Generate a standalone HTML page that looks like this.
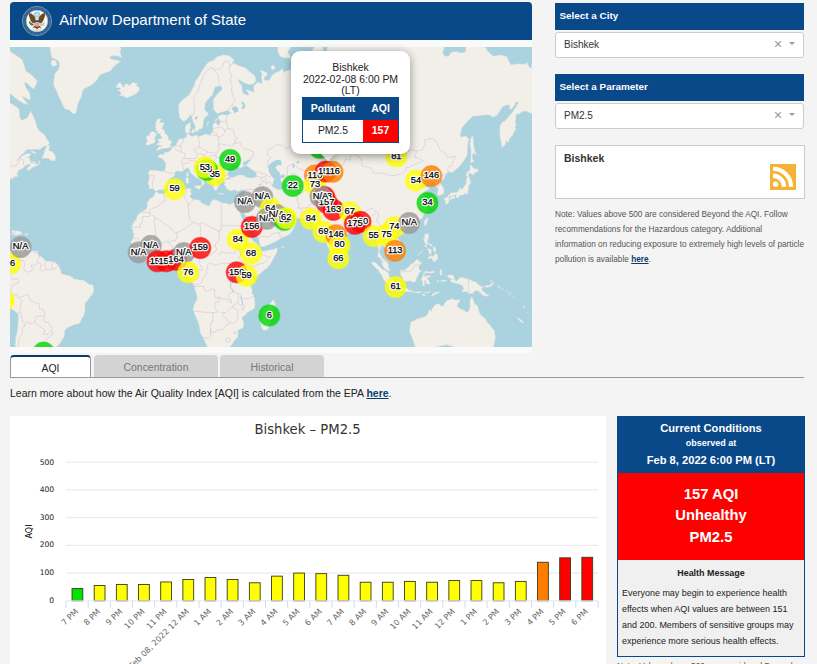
<!DOCTYPE html>
<html lang="en">
<head>
<meta charset="utf-8">
<title>AirNow Department of State</title>
<style>
*{box-sizing:border-box;margin:0;padding:0}
html,body{width:817px;height:664px;overflow:hidden;background:#f4f4f4;font-family:"Liberation Sans",Arial,sans-serif;color:#222}
.abs{position:absolute}
#hdr{left:10px;top:2px;width:522px;height:38px;background:#0a4989;border-radius:4px 4px 0 0}
#hdr .t{position:absolute;left:49.3px;top:9px;font-size:15px;color:#fff;line-height:17px;white-space:nowrap}
#seal{position:absolute;left:12px;top:4px}
#map{left:10px;top:47px;width:522px;height:300px;background:#aad3df;overflow:hidden}
.ph{background:#0a4989;color:#fff;font-weight:bold;font-size:9.9px;line-height:26px;padding-left:4.5px;height:27px;left:555px;width:249.3px}
.sel{left:555px;width:249.3px;height:26px;background:#fff;border:1px solid #ccc;border-radius:3px;font-size:10px;line-height:23.6px;padding-left:8px;color:#333}
.sel .x{position:absolute;right:21px;top:0;font-size:14.5px;color:#999}
.sel .a{position:absolute;right:8.6px;top:9.7px;width:0;height:0;border-left:3.2px solid transparent;border-right:3.2px solid transparent;border-top:3.3px solid #999}
#rss{left:555px;top:145px;width:249.5px;height:53.5px;background:#fff;border:1px solid #ccc}
#rss .n{position:absolute;left:8px;top:6px;font-size:10.5px;font-weight:bold;color:#333}
#note{left:555px;top:208.3px;width:260px;font-size:8.25px;line-height:14.9px;color:#555;white-space:nowrap}
#note b{color:#0a3d6e;text-decoration:underline}
.tab{top:355px;height:22px;font-size:10.45px;line-height:26.6px;text-align:center;color:#777;background:#d3d3d3;border-radius:4px 4px 0 0}
.tab.on{background:#fff;color:#222;border:1px solid #999;border-top:2px solid #0a3d6e;border-bottom:0;height:23px;line-height:23.4px}
#tabline{left:10px;top:377px;width:794px;height:1px;background:#999}
#learn{left:10px;top:387px;font-size:10.5px;line-height:12px;white-space:nowrap;color:#222}
#learn b{color:#0a3d6e;text-decoration:underline}
#chart{left:10px;top:416px;width:596px;height:248px;background:#fff;overflow:hidden}
#cc{left:617px;top:416px;width:188px;height:241px;border:1px solid #0a4989;background:#f0f0f0;text-align:center}
#cc .b{background:#0a4989;color:#fff;font-weight:bold;height:56px}
#cc .r{background:#ff0000;color:#fff;font-weight:bold;height:87px;font-size:14.8px;line-height:21.7px;padding-top:10.5px}
#cc .hm{font-weight:bold;font-size:8.95px;color:#222;margin-top:7.5px;line-height:11px}
#cc .tx{text-align:left;font-size:8.97px;line-height:15.95px;color:#222;padding:7.4px 0 0 4px;white-space:nowrap}
#note2{left:617px;top:661.2px;font-size:8.3px;color:#555;white-space:nowrap}
#pop{left:291px;top:51px;width:119px;height:103px;background:#fff;border-radius:9px;box-shadow:0 2px 10px rgba(0,0,0,.4);text-align:center;font-size:10.45px;line-height:11.8px;color:#222}
#poptip{left:322.7px;top:148.8px;width:10px;height:10px;background:#fff;transform:rotate(45deg);box-shadow:0 2px 10px rgba(0,0,0,.4)}
#pop table{position:absolute;left:11px;top:46px;width:97px;border-collapse:collapse;border:1px solid #0a4989}
#pop th{background:#0a4989;color:#fff;font-size:10.45px;height:22px}
#pop td{height:23px;font-size:10.45px}
</style>
</head>
<body>
<div class="abs" id="hdr"><svg id="seal" width="32" height="32" viewBox="-16 -16 32 32" style="position:absolute;left:11px;top:3px">
<circle r="14.6" fill="#23589a" stroke="#8fb096" stroke-width=".8"/>
<circle r="12.7" fill="none" stroke="#5d86b9" stroke-width="1.8" stroke-dasharray="1.1 .9" opacity=".6"/>
<circle r="10.8" fill="#fbfaf5" stroke="#a9c2a4" stroke-width=".6"/>
<circle cx="0" cy="-6.2" r="3.3" fill="#a7cbe2"/>
<circle cx="0" cy="-6.2" r="1.7" fill="#c9dfec"/>
<path d="M-1.2 -2.2C-3 -6 -5.5 -8 -8.3 -7.6C-7.6 -6.4 -8.6 -5.6 -7.6 -4.4C-8 -3.2 -6.9 -2.4 -6.6 -1.2C-6.4 .2 -5.2 .9 -4.4 1.9C-3.4 2.6 -2.4 2.2 -1.6 1.4Z" fill="#6d4a1f"/>
<path d="M1.2 -2.2C3 -6 5.5 -8 8.3 -7.6C7.6 -6.4 8.6 -5.6 7.6 -4.4C8 -3.2 6.9 -2.4 6.6 -1.2C6.4 .2 5.2 .9 4.4 1.9C3.4 2.6 2.4 2.2 1.6 1.4Z" fill="#6d4a1f"/>
<path d="M-1.3 -3.4Q0 -4.6 1.3 -3.4L1.5 -.6L-1.5 -.6Z" fill="#e9e4d6"/>
<path d="M-2.3 -.8H2.3V1H-2.3Z" fill="#2b4f8e"/>
<path d="M-2.3 1H2.3V3.4Q2.3 5.4 0 6.3Q-2.3 5.4 -2.3 3.4Z" fill="#e56a6a"/>
<path d="M-1.4 1V5.7M-.5 1V6.1M.5 1V6.1M1.4 1V5.7" stroke="#f6d4d0" stroke-width=".45" fill="none"/>
<path d="M-2.4 4.6L-4.6 7.4L-2 6.6L0 8.4L2 6.6L4.6 7.4L2.4 4.6Q0 7 -2.4 4.6Z" fill="#6d4a1f"/>
<path d="M-3.2 4.4C-5 5 -6.6 4.2 -7.6 2.4C-8.2 1.2 -7.8 .2 -7 -.4C-6.8 1.4 -5.4 2.6 -3.4 3.2Z" fill="#4f7a35"/>
<path d="M3.2 3.6L7.4 1.2M3.4 4.2L7.8 2.6M3.4 4.8L7.6 4.2" stroke="#8a8a80" stroke-width=".5" fill="none"/>
<path d="M-4.5 8.6Q0 10.4 4.5 8.6" stroke="#c9c3ae" stroke-width=".8" fill="none"/>
</svg><div class="t">AirNow Department of State</div></div>
<div class="abs" style="left:10px;top:40px;width:522px;height:7px;background:#fafafa"></div>
<div class="abs" style="left:10px;top:347px;width:522px;height:6px;background:#fafafa"></div>
<div class="abs" id="map">
<svg width="522" height="300" viewBox="0 0 522 300" style="position:absolute;left:0;top:0">
<rect width="522" height="300" fill="#aad3df"/>
<path fill="#f2efe9" stroke="#e3ddd6" stroke-width=".4" d="M213 7.9L218.8 8.5L224.3 13L222 15.5L228.4 18.6L234.8 20.4L240.1 25.1L244.8 29.1L246.1 33.5L243.7 36.7L239.4 37.7L233.7 35.6L227.9 31.9L228.8 34.6L232 39.3L232.4 45.4L235.8 47.8L238.6 48.3L238.6 45.9L236 43.4L236.9 42.4L240.1 43.9L242.9 44.9L244.3 44.9L243.3 40.3L244.6 37.7L248 35.1L251 36.7L252.4 35.6L251.4 31.3L252.2 26.8L250.3 23.4L252.9 23.9L256.5 25.7L257.4 28L254.8 29.6L253.9 32.9L257.1 33.5L259.7 32.9L261.8 28.5L265.7 25.7L269.9 23.9L272.7 21.6L273.6 25.7L276.3 23.9L280.6 22.8L283.8 21.6L287.4 15.5L289.1 16.8L294.4 19.2L298.7 21L301.3 22.8L304 25.1L305.1 21.6L303 18L300.8 14.9L300.4 9.8L301.3 5.2L304 0.4L305.1 -12.8L398.9 -20.8L400 -9L401 -9.7L409.6 -6.7L420.2 -6.7L424.5 -9.7L428.8 -9L433 -4.6L434.1 3.2L432.4 4.5L433.7 8.5L438.4 9.8L441.6 5.2L445.8 4.5L451.2 5.9L455.4 5.2L456.1 -0.3L458.6 -3.1L462.9 -2.4L469.3 -0.3L475.7 0.4L477.8 4.5L483.1 9.2L490.6 7.9L497 9.8L499.1 14.9L501.3 18L507.6 16.8L514 17.4L516.8 15.5L519.4 20.4L521.5 21L522.1 14.9L526.8 13.7L526.8 59.5L524.7 62.6L521.1 66.5L516.2 63.9L511.9 64.7L509.4 66.9L506.2 66.9L505.9 70.2L505.3 75.1L505.9 78.3L504.9 81L506.2 81.8L503.4 85.9L503 87.8L499.1 92.5L498.9 95.6L496.1 93.5L495.5 97.4L492.1 100.4L491.7 98.4L490.6 93.2L489.7 85.9L490 79.1L492.3 75.1L494.9 74.3L498.7 69.4L503.2 64.3L506.6 59L508.7 54.9L505.9 54.9L504.5 58.6L500.2 63L499.5 58.1L496.6 58.1L492.7 59.5L488.5 66L487.4 68.1L483.1 70.2L479.5 68.1L475.7 67.7L467.1 69L462.9 69L457.5 74.3L452.2 80.2L450.1 87.8L451.2 90.3L455.4 88.9L459.3 92.1L458.6 93.2L457.5 98.4L457.5 103.4L457.1 108.3L453.3 114.7L448 120.7L441.6 125.8L439.4 124.6L436.9 126.6L434.5 129.5L434.5 131.5L429.8 134.5L429.8 135.9L431.5 137.6L433.9 141.9L433.9 145.9L432.2 147.4L427.7 148.7L427.5 145.9L428.1 142.4L427.1 140L424.5 139.2L425.1 135.1L423.2 134L418.7 135.4L416.6 137L417.7 133.7L418.5 132.3L416 131.5L412.3 135.1L409.1 136.2L409.6 138.7L411.7 141.1L415.5 139.7L419.2 140.8L418.7 142.2L414.9 144.3L412.3 147.2L414.5 149L415.8 153.3L417.9 155.6L417.7 157.6L414.9 159.1L417 160L418.1 160.3L417.3 164L415.1 165.9L413.2 168.3L412.8 170.6L410 173L407.9 175.3L406.4 176.7L401.7 177.6L400 178.3L396.8 179.5L393.6 180.4L393.2 182.7L391.9 182.2L391.7 179.9L388.9 179.7L386.1 181.1L385.1 182.9L383.4 185.6L385.1 188.3L387.2 191.2L390 193.7L391 197.8L390.8 201.8L388.3 203.7L386.1 204.6L385.1 206.3L382.3 208.3L381.4 208.5L381.9 205.5L380.4 204.6L378.7 204.2L377.4 201.8L375.9 200.7L373.3 199.6L373.1 197.8L371.6 198.1L371.2 200.5L370.1 203.3L369.5 206.6L371.2 208.7L372.3 211.5L374.4 212.4L376.5 214.5L378.4 217.3L378.4 220.5L380.2 223.7L378.7 224.1L376.1 222.4L374 220.7L372.5 218.4L371.8 214.9L371.4 213L369.1 210.2L367.6 209.8L368 206.6L368.4 204.4L368.4 201.1L367.4 197.8L366.9 195.7L366.5 193.4L366.1 191.2L364.4 190.3L361.4 192.8L359.3 192.3L359.5 189L358 185L356.3 183.4L354.1 179.9L353.7 178.1L352 177.6L350.9 179L347.7 179.3L345.6 179.5L343.5 180.6L343.1 182.7L340.3 184L338.2 186.1L335 189.2L333.3 191.2L330.7 192.8L329 193.9L328.6 196.8L329.2 198.5L328.1 201.6L328.1 204.8L326.4 207L324.7 207.8L323.3 209.6L321.1 207.6L320.5 205.5L319 202L317.5 199.2L316.6 195.7L314.7 192.3L313.6 189L313.2 185.6L313 182.2L312.8 180.4L312.1 181.1L309.4 181.8L307.2 180.4L305.1 178.1L307.9 176.5L305.5 177L303.4 175.1L301.9 174.4L300.8 172.3L299.8 170.9L295.5 171.4L290.2 171.6L284.9 170.9L280.2 170.2L279.5 167.6L278 166.8L274.8 168L271 167.1L267.8 164.9L266.3 162.5L265 159.8L262.5 158.8L261.4 159.8L260.3 160L260.1 161.3L260.8 163L262 165.4L264 167.3L265 168.3L264.8 169.9L266.3 172.5L266.3 170.6L267.2 169.2L268 171.1L267.6 172.8L269.9 173.9L273.1 173.7L275.9 171.1L277.6 169.5L278.2 168.8L278.2 171.8L278.7 173.2L281.2 174.6L283.1 175.1L285.5 177.6L283.1 182.2L281.2 185.6L278.5 187.9L275.9 189.2L273.1 190.1L269.3 192.3L265.7 194.5L262.5 196.1L259.3 197.4L253.9 199.4L250.7 199.6L250.1 198.3L249.2 195L249 191.7L246.5 188.3L244.3 185.2L241.6 181.1L241.1 178.1L239.4 174.6L237.5 171.8L235.8 169L233 164.7L232.4 161.3L231.1 165.2L229 163.5L227.5 160L226.9 156.8L230.9 156.6L232.4 153.6L233.9 149.7L234.5 145.9L235 142.7L233.7 143L231.6 142.4L230.1 144L227.3 144.3L224.1 142.4L223 143.5L220.9 144L218.3 142.4L216.4 141.9L216 139.5L214.1 138.4L215.1 135.6L213.6 135.1L213.9 133.7L216.6 132.6L219.8 132.3L220.3 130.3L224.1 130.3L228.4 128.1L232.6 128.1L235.8 130.1L239 130.9L243.3 130.9L246.5 129.5L246.7 126.6L243.3 123.7L240.1 121L237.5 119.2L236 118.3L237.9 116.2L239 114.7L241.6 112.5L239 112.8L235.8 114L233 115.3L232.6 117.1L233.7 118.3L235.8 118L233.5 119.2L231.6 120.4L229.4 121L227.5 118.3L229.6 116.2L226.2 115.3L225.2 114.3L223.5 114.7L221.3 118.3L219.2 121.3L219 123.7L217.5 126L217.7 128.1L219.8 130.3L217.7 130.9L216.2 131.8L213.9 133.4L213.4 131.8L210.2 131.2L209.8 133.2L208.7 134L206.8 132.3L206.2 134.3L207.5 136.2L207 137.3L209.2 139.2L209.2 140L207.5 139.5L207.5 141.1L206.6 143.2L205.8 143.5L204.3 142.4L203 139.7L203.4 138.4L202.1 136.7L201.1 135.1L199.4 132.6L199.6 129.2L198.7 127.8L197.2 126.6L194.7 124.9L192.5 123.4L190.4 121.3L189.6 118.9L188.3 118.6L187.6 119.8L187 117.4L184.4 118L184.2 121.3L186.8 123.4L188.3 126.9L192.1 128.3L191.9 129.5L194.7 131.2L197.4 133.4L197 134.3L194.7 132.6L193.4 134L194.5 136.5L193.2 138.1L192.3 139.5L191.5 139.2L191.9 137.3L192.3 135.9L191.3 133.7L189.6 132L188.3 131.5L185.7 130.3L184 128.6L181.7 126.9L180.4 125.2L179.7 122.5L178.3 121.3L176.8 121L175.1 122.5L173.8 123.1L172.1 124.6L169.3 124.3L167.2 123.7L165.5 124.3L164.6 126.6L164.8 128.3L162.7 130.1L159.9 131.5L158 134L157.4 135.4L158.4 137.3L156.9 138.4L156.3 140.3L153.9 142.2L153.3 142.7L148.6 142.7L146.6 144.3L145.2 144L144.4 142.4L142.2 141.4L139 141.9L139.2 138.1L137.7 137L139 133.2L139.5 130.3L139 127.8L138.2 125.2L140.5 123.1L143.1 123.4L145.6 123.4L149.5 124L153.7 124.3L154.8 123.7L155.4 120.4L155.7 117.4L155.4 115.6L153.3 112.8L152 111.5L148.6 110.6L147.8 108.7L150.5 107.4L153.9 107.7L154.6 104.8L155.4 105.4L158.2 105.1L161.2 103.1L161.4 100.4L163.3 99.8L165.5 98.7L166.5 96.7L168 93.5L169.7 92.1L172.9 91.7L175.1 91L176.1 89.9L177 89.6L176.3 86.3L175.3 83.7L175.3 79.8L176.3 77.9L179.1 75.9L180.6 75.5L180 79.5L181.2 80.6L179.7 82.5L178.7 84.8L178.3 86.7L179.3 87.8L181.5 89.6L183.6 88.9L186.8 88.1L188.3 89.9L192.1 88.5L196.4 86.7L197.7 88.1L200 88.1L200.6 86.3L202.8 85.2L203 82.1L202.8 79.1L203.8 76.3L206.2 75.5L207.5 77.9L209.2 78.3L210 75.1L210 73.1L208.1 71.5L208.1 69.4L210.7 68.1L213.4 67.7L217.7 68.1L219.8 66.5L222.4 66.5L219.8 65.2L218.8 63.5L215.6 63.9L211.3 65.2L207 66.5L205.3 64.3L203.4 62.1L203.6 57.7L203.2 53.6L203.8 51.7L206.6 48.3L209.2 44.9L211.9 42.9L211.9 39.8L209.6 38.8L205.3 39.8L203.6 43.9L202.3 48.3L199.6 50.7L197.4 53.1L195.1 55.9L194.7 61.7L194.7 63L197.4 65.6L198.3 67.3L196.6 69L194.2 71.5L193.4 74.7L193 79.5L191.9 81.8L188.9 82.1L188.3 84.4L185.5 84.4L184.9 81.8L185.5 79.8L183.4 75.5L181.9 70.6L181.5 69.4L180.6 66.5L180 69L178.3 70.6L175.5 73.5L173 74.3L169.9 71.1L168.9 66L168.7 61.7L168.7 57.2L171.9 53.6L176.1 50.2L179.3 47.8L181.5 43.4L184.2 38.8L185.7 33.5L188.9 29.6L191 25.7L193.2 22.2L196.4 17.4L198.5 14.9L202.8 13.7L207 9.8ZM145.4 145.1L146.7 144.8L148.6 146.6L151.6 146.4L153.7 146.9L155.9 145.3L158.2 144.5L160.8 143.2L164.5 142.4L168.7 142.4L171.9 141.9L174.6 142.2L177.2 141.4L178.9 141.1L180 142.2L181.6 141.8L180.6 143.5L180.6 145.1L181.5 146.6L181 147.9L179.5 149.7L180.6 150.8L181.9 151.5L184.7 152.8L186.1 152.6L190.4 153.8L191.3 156.1L195.3 157.6L198.5 159.1L200.6 157.3L200.6 154.8L203.8 152.6L207 153.3L211.3 155.3L211.7 156.1L216.2 156.3L219.8 157.6L222 156.6L224.1 155.8L226.9 156.6L229.4 156.8L231.1 156.6L232.4 161L231.1 165.2L229 163.5L227.4 159.9L227.7 162.5L229.6 164.9L230.3 167.1L231.6 169.9L233.7 174.2L234.1 176.5L236.7 178.8L237.5 181.1L237.3 184.3L237.9 186.5L240.3 187.9L242.2 193.2L243.9 194.5L245.8 195.7L248.4 198.5L249.9 199.6L250.3 202L250.7 203.3L252.4 204.6L256.1 203.7L259.3 203.1L262.5 202.7L266.3 201.3L267.4 201.6L266.9 204.6L266.3 206.6L264.2 209.8L262.5 213.4L260.3 217.3L256.1 222.2L254.6 222.6L250.7 226.3L247.5 228.8L245.4 231.2L243.7 232.4L242.6 235.4L241.6 237.6L240.7 239.9L241.8 241.6L242.2 244L241.8 246.2L244.1 249.2L244.6 253.8L245 258.1L244.6 260.4L242.9 262.4L238.8 264.6L236.7 265.7L235.4 267.9L232.4 270L232 272L233.5 274.5L233.7 279.2L232.6 281L229 282.7L227.5 284.1L228.1 286.2L227.5 290.3L224.3 293.8L222.4 297L219.8 300.2L217.5 301.5L212.8 304.1L206 304.3L200.6 306.1L197.4 304.8L197 301L196.8 298.2L194.9 294.7L193.2 290.6L190.6 286.7L188.9 277.1L186.6 271.6L184.2 265.9L183.2 263.7L183.2 261.5L184.4 257L186.6 253.5L187.4 250.5L186.1 245.7L184.2 239.9L183.6 237.6L183.2 236.7L181.5 234.8L178.5 231.8L176.8 228.4L178.3 226L178.7 224.3L178.9 222L178.7 218.6L177 217.3L175.7 217.3L172.9 217.5L170.8 217.7L169.1 215.2L167.4 213.4L165.2 213.2L163.1 213.4L160.6 213.9L159.9 214.5L157.6 215.2L153.7 216.7L151.4 216L149.5 215.8L146.3 216L142 217.5L138.8 216.2L135 213.4L133.5 212.2L131.3 211.1L129.9 208.7L128.8 206.6L126.9 204.4L126 203.3L124.7 201.3L122.4 200.3L122.2 198.1L122.4 196.8L120.7 195.2L122.2 193.2L122.8 192.1L123.9 187.7L123 184.7L123.2 182.7L121.6 181.5L122 179L123.9 174.9L126.2 172.5L127.1 169.2L129.9 165.4L130.5 164.9L133.5 164L136.7 161.3L137.5 158.8L137.1 156.3L138.4 153.6L139.9 151.5L141.8 150.8L143.5 149.7L144.8 146.6ZM263.1 252.7L265 256L265.7 259.9L264.2 260.4L264.4 261.5L263.3 264.6L263.3 266.4L262 270.4L260.3 275.5L258.8 280.1L258.2 282L255 283.4L252 282L251.2 278.5L250.3 275L251.4 271.6L252.7 270L251.8 267L251.8 264.1L252.9 261.9L255 261.5L256.7 260.8L258.8 258.8L260.3 256.2L262 254ZM145.8 103.3L146.9 103.6L150.5 102.4L151.6 101.1L153.9 101.4L155.9 101.1L158.6 100.9L161 99.6L161 98.7L159.5 98.4L160.1 97.4L161.4 96.3L161.7 94.6L160.8 93.3L158.9 93.3L158.4 93.2L158.7 92.1L158.2 91L157.8 89.2L156.9 87.8L155.4 87.2L155 85.9L154.2 83.5L153.3 82.1L151 82.1L152.5 81L152 80.4L153.5 77.9L154.2 75.9L151 75.5L149.3 75.9L149.7 74.7L151.4 71.9L147.3 71.9L146.7 73.5L145.6 76.3L146.1 78.7L144.8 79.5L146.1 81L145.8 84.4L146.9 84L147.8 83.7L147.6 85.9L147.1 86.7L148.6 87L150.5 86.3L150.3 87.8L151.2 89.2L151.8 90.3L151.5 91.7L150.8 91.9L148.8 91.7L148.2 92.1L148.4 93.5L148 93.9L149.3 94.6L149.3 95.6L148 96.3L146.7 97L147.1 97.9L149 98L151.4 98.7L152.2 98L151.6 99.4L149 99.4L148.2 100.8L147.1 102.1ZM144.4 96L142 96.7L140.3 97.4L137.3 98.4L135.8 97L136 96L137.5 94.6L136.9 92.1L136.5 91.4L136.7 88.9L139.5 88.5L139.7 87.4L140.1 85.9L142.2 84.6L145 85.2L146.1 87L146.3 88.5L145 89.6L144.8 92.1L145.2 94.2ZM105.8 40.3L107.9 36.7L110.2 35.4L112.2 38.3L113.2 40.3L114.7 39.3L114.9 37.2L117.9 37L119.2 39.3L120.7 37.2L123 35.1L124.5 36.2L126.9 35.9L126.4 38.8L129 40.3L129.2 42.9L127.1 45.9L125.2 46.9L123.5 48.3L120.1 49.3L117.5 50.7L114.7 50L112.8 48.6L109.6 48.8L111.1 46.4L110.2 44.1L106.8 43.9L110 42.4L110.7 40.9ZM38.6 -12.8L39.7 -1.7L40.7 5.2L41.8 10.5L47.1 13L49.3 15.5L49.3 19.8L48.2 22.8L45 26.8L43.9 32.4L43.5 37.7L46.1 42.9L47.8 46.9L50.3 52.6L52.5 57.2L54.6 61.7L59.5 63L61.6 65.6L64.4 66.9L66.1 65.6L66.8 61.7L68.5 54.9L71.4 49.8L72.1 45.4L73.8 41.9L77.8 39.8L81.2 38.3L86.6 33.5L89.8 28L95.1 25.7L100.4 23.9L103.6 19.8L107.9 16.2L110.5 14.3L105.8 13L101.5 12.4L99.4 9.8L104.7 8.5L110 9.8L111.7 11.1L110 5.2L111.1 1.8L109 -2.4L111.1 -12.8ZM41.2 13.7L45 13L47.3 17.4L43.9 19.5L41.2 17.4ZM20.5 103.8L24.8 104.8L26.5 106.4L22.6 105.8ZM404.7 306.6L404.7 297.7L403.2 294L402.3 291.1L401 287.9L399.8 284.8L399.8 280.8L400.2 278.5L400.6 276.2L401.4 274.5L402.3 274.5L404 273.9L406.8 271.8L407.9 272L410.9 271.1L413.4 270.3L416.4 269.1L417.7 266.8L418.5 265.9L418.5 264.1L420 262.4L421.5 264.4L421.9 262.1L423.6 260.1L424.9 258.1L426.8 257.3L428.6 256.5L430.5 258.1L431.3 259.3L433.5 259L434.3 257L435.6 254.9L436.9 253.5L438.4 253.1L440.7 252.9L440.7 251.4L439.9 250.8L442.6 252.2L445.8 253.1L448 252.7L449.9 253.1L449.2 255.3L447.7 256.4L447.7 258.8L446.7 259.3L449.4 261.2L451.6 262.4L454.3 263.5L455.6 264.8L458.2 265L459.5 261.7L460.1 259.3L459.9 256.6L460.1 254L461 251.1L461.8 249.8L462.7 251.6L463.9 254.4L464.6 257L466.1 257.7L467.8 259.3L468 261.5L468.8 263.5L469.5 265.9L471 268.6L473.1 270L475.2 271.6L476.1 273.2L477.6 275.9L479.5 277.3L480.6 279.4L482.9 281.5L484.4 283.9L484.6 286.7L485.5 290.6L484.6 294L484 297.7L483.1 300L482.5 306.6L444.8 306.6L444.1 300.5L442.6 299.2L439.4 298.7L437.7 297.7L435.2 298L432.8 298.2L429.8 299.2L426.6 299.7L423.4 301.5L422.4 306.6ZM-8.3 -12.8L-4 -0.3L-0.8 3.9L5.6 7.9L12 12.4L14.1 18L15.8 23.9L21.6 28L25.8 32.4L27.3 34.6L25.8 37.7L23.7 41.9L20.5 39.8L17.3 36.2L14.1 35.6L16.2 41.4L19 44.9L20.3 49.8L19.8 53.1L16.2 51.2L12 49L14.1 52.6L17.3 55.9L18.1 57.7L13 55.9L8.8 53.6L4.5 50.2L0 46.4L-8.3 45.4ZM163.1 134.8L164.6 133.8L165.4 134.5L164.5 135.6L163.3 135.2ZM402.1 244.4L404.7 244.4L404.2 245.7L402.3 245.1ZM405.1 244.9L406.8 244.7L406.6 246L405.1 245.7ZM407 245.1L408.7 244.4L410.2 244.7L411.9 244.7L411.9 245.5L409.6 245.8L407.2 246.2ZM413.6 245.1L417 245.1L420 244.4L420.2 245.1L417.7 246L414.5 245.7L413.6 245.7ZM411.7 247.2L413.8 247L415.5 248.3L414.3 249L412.1 247.9ZM421.3 249L422.6 247L424.7 245.5L427.7 244.9L429.4 244.9L427.7 246.2L424.9 247.5L423.2 248.8ZM390.4 223.7L391.7 222.6L393.2 223.3L395.1 223.7L395.5 222L398.9 220.1L400.8 217.3L403.2 216.2L405.3 214.1L406.8 212.2L408.1 212.8L408.9 214.3L412.1 215.4L411.5 216.2L410.2 217.5L408.7 219.2L409.1 222.6L411.7 224.8L409.4 225.2L408.5 226.9L408.3 228.6L407 229.7L406.4 231.6L406 233.3L405.3 234.6L402.5 235.6L402.1 234.2L398.9 233.7L396.4 234.4L392.9 233.1L392.5 230.5L390.8 228L390.6 226.3L390.4 224.8ZM426.6 233.7L428.6 233.5L429.2 234.6L427.3 235ZM176.3 126.9L178 125.2L178.4 127.8L177.6 129.8L176.5 128.9ZM208.1 145.9L210.2 146.1L214.1 146.6L213 147.2L210.7 147.3L208.3 146.5ZM226.9 147L228.4 146.2L231.8 145.3L230.5 147.2L228.4 148.2L227.1 147.8ZM178.9 84L180.8 84L181 85.5L179.5 85.9ZM196.8 77.9L197.9 74.7L198.7 74.7L198.1 77.1L197 78.7ZM389.7 185.2L391.5 183.4L393.8 183.1L394.7 184.3L393.6 186.1L391.7 187.4L389.7 186.8ZM429.8 224.8L430.7 222.2L432.2 223.7L430.9 225.4L432.6 226.3L431.3 227.5L430.7 228.8L430 226.9ZM-0.8 187L1.5 187.4L3.2 186.5L3.6 186.8L2.8 185.6L1.5 184L2.8 183.5L5.1 183.8L9 184L10.5 185L12.2 186.5L11.5 187.4L8.8 187.2L6.4 188.3L5.3 188.6L3.4 187.4L-0.8 187.2ZM456.5 129.6L458.9 128.6L457.8 126.6L457.1 127.2L458.6 127.2L460.5 126.3L463.4 128.2L464.2 126.3L465.9 125.2L468.8 124.1L467.8 123.4L467.9 121.2L465.6 122.2L462.9 120.4L460.7 117.7L459.9 118.6L460.2 120.7L459.9 122.5L459.3 124.3L457.3 124.3L457.3 125.5L456.1 126.3L456.1 127.5ZM437.1 149.7L438.1 148.7L440.7 146.1L442.2 145.7L444.3 145.7L446.5 145.3L448 145.3L448.2 143.7L449.4 142.2L449.7 140.8L450.7 140.5L450.1 142.2L450.9 142.4L452.6 141.6L454.1 139.7L455.4 137.8L456.3 135.9L456.3 134L456.5 132L457.1 130.3L458.4 129.5L459.5 129.8L459.7 132.3L460.7 134.8L459.9 137.6L458.6 138.7L458.6 141.9L457.8 143.7L458.3 145.3L457.1 146.9L456.2 147.4L456.1 145.6L455.6 146.6L454.6 146.6L454 148.2L453.3 147.2L452.6 148.2L450.5 148.2L449.9 147.2L449.9 149L448.6 150L447.5 151.2L446 150L446 149L446.7 148.1L445 147.8L443.5 148.5L441.6 149L440.3 148.8L439.4 150L437.3 149.9ZM382.3 241.4L384 239.5L385.7 239.9L388.9 240.4L389.5 241.3L393.4 241.8L394.4 240.6L395.7 241.2L398.1 241.6L398.3 242.3L398.9 243.4L401.9 243.6L401.9 245.3L399.6 244.7L396.1 244.7L392.5 243.8L389.7 243.4L387.2 243.4L384.8 242.5L382.9 241.5ZM261 19.2L263.1 18L265.2 20.4L263.5 22.8L261.6 22.2ZM437.1 150L438.8 150.8L439.4 152.8L438.1 156.3L436.7 157.3L435.6 156.6L435.6 154.3L434.5 152.8L434.3 151.5L436 150.5ZM0.2 132L2.4 131.9L4.5 131L3.4 130.6L1.1 131.2ZM415.1 186.8L417.3 187.1L418.5 186.8L418.7 189.4L418.5 191.9L417.3 192.8L417.3 194.8L418.5 196.5L420.9 197L422.4 198.9L422.6 199.8L420.9 198.9L419.4 198.5L419.2 197L417.5 197L416 197.4L415.1 196.3L415.8 195.4L414.9 195.7L414.3 194.8L413.6 192.8L413.4 191.7L414.5 192.1L414.5 190.1L414.7 188.8ZM425.6 205.9L427.3 207.8L427.9 211.3L427.1 213.4L426 212.2L425.8 211.9L425.4 214.9L422.8 213.9L422.4 212.4L422.8 211.5L421.1 211.1L418.3 212.2L418.3 210.2L420 209.4L421.1 208.3L421.9 209.6L422.8 209.4L423.9 208.7L424.7 207.6ZM-8.3 55.4L0 55.9L4.5 58.6L8.8 61.7L9.6 66L9.6 70.2L12 73.5L17.3 71.1L19.4 66.9L20.7 64.3L23.7 70.2L25.8 75.1L26.9 80.2L30.1 84.8L33.3 86.7L35.4 88.9L36.5 91.4L39 94.9L39.2 96.7L36.9 98.7L33.3 99.4L30.1 102.4L23.7 102.4L16.4 102.8L14.1 105.8L10.9 108.3L8.8 110.9L6.2 113.7L8.8 112.5L12 109L17.3 106.4L20.9 106.7L21.1 107.4L18.4 109.9L16.2 109.9L19.4 110.6L19.8 113.1L20.5 115.6L22 116.2L25.8 116.8L27.1 117.4L29.4 116.2L29.2 113.1L30.5 116.2L27.9 118.3L22.6 120.4L18.4 123.7L16.9 122.2L17.3 120.7L20.5 118.3L19.4 116.8L15.2 118.9L14.1 120.4L10.9 122.2L8.3 123.4L7.3 126.3L6.6 127.2L7.5 128.3L8.8 128.8L8.8 127.9L8.9 128.9L7.3 129.5L5.8 129.5L2.6 130.3L0.9 131.2L0 132L-8.3 133.7ZM474.2 238.9L476.7 238.6L478.9 238.6L481 237.6L481.2 235.9L482.7 235.9L482.7 237.6L481 239.3L477.8 240.4L475.7 240.1ZM507.4 270.4L509.8 271.8L513 274.5L514 275.9L512.6 275.7L509.8 273.9L507.9 271.8ZM39.7 98L39 101.8L38.6 103.4L39.7 103.8L42.9 105.1L43.9 106.7L45 108.3L45.6 111.2L44.8 114.2L42.9 113.4L40.7 113.4L38.6 111.2L35.4 111.2L31.6 111.2L33.3 108.3L34.3 105.1L35.8 101.1L37.1 98.7ZM437.3 228.6L440.5 227.8L443.7 228.6L444.3 231.2L445.4 233.9L446.9 234.2L449 231.6L452 230.1L454.3 231.2L458 232.2L459.7 232.7L462.9 234.2L466.3 235.2L468.8 238L471.4 239.5L473.1 239.9L473.3 241L471.4 241.4L472.5 243.8L474.2 245.3L476.7 247.2L479.5 249L477.4 249.2L473.5 248.8L471.8 247.2L469.3 244.7L466.7 243.4L464.6 244L463.5 245.1L462.9 246.6L460.7 246.6L458.6 246.4L456.1 244.4L453.3 244.7L451.6 244.9L453.3 242.3L453.9 241.4L452.2 238.6L449 236.9L445.8 236.3L442.6 235.2L441.1 235.4L441.3 233.9L440.1 233.1L442.6 232.2L443.7 232L440.5 231.6L437.9 230.1ZM479.3 232.4L481 233.3L483.3 235.2L484.4 236.9L483.6 236.5L481.6 234.4L479.5 233.1ZM267.8 4.5L269.9 9.2L273.1 10.5L276.3 11.1L280.6 11.1L279.5 7.2L277.4 5.2L280.6 0.4L281.7 -12.8L269.9 -12.8L269.9 -3.8L267.8 1.1ZM20.9 114L23.7 115L25.8 114.8L24.8 116.2L22 115.6ZM14.6 186.9L18 187L17.9 187.9L14.7 188ZM204.7 73.1L206.2 71.7L207.5 72.3L206.6 73.5L205.1 74.3ZM462.2 88.1L463.3 92.1L463.5 96.7L464.2 101.8L465.6 106.1L466.5 107.7L462.9 105.8L462 109.9L462.9 113.1L463.9 113.7L463.7 116L462.4 114.3L461 116.2L460.5 113.1L461 109.9L461 106.7L461.1 103.4L460.3 98.4L460.1 95.6L460.5 92.1L461.4 91ZM-8.3 203.3L0 202.7L2.4 202.7L4.1 201.3L5.3 200.3L6.4 201.1L5.8 203.3L4.9 205.5L6.4 205.9L6.6 203.5L8.3 202.2L8.8 200.7L9.4 202.2L12.2 202.9L12.6 204.2L15.2 204.2L17.3 204.2L19.4 205.3L21.6 204.6L22 204L25.8 204L24.1 204.6L25 205.7L27.9 206.6L28.4 208.5L30.5 209.1L33.3 211.5L33.9 212.4L36 214.1L40.3 214.3L42.9 214.5L46.5 216.4L48 217.9L49.3 220.5L50.3 222.8L51.4 225L50.8 226.5L52.9 227.3L54.8 227.5L55.7 228.4L56.9 228.2L59.9 229L62.9 230.7L63.6 232.2L65.7 232L69.5 233.1L72.7 232.9L75.9 234.8L78.5 236.9L81.2 237.8L82.7 238L83.4 240.1L83.8 242.2L83.7 244.2L82.7 246.8L80.6 249.2L79.1 250.9L78.3 252.7L75.9 254.9L74.9 257L74.9 260.4L75.1 263.7L74.4 265.9L73.4 269.3L72.1 271.1L70.6 273.9L70.6 275L68.5 277.1L65.9 277.3L62.9 278L61.2 279.2L59.3 279.6L55.9 282L54.6 284.1L54.4 286.7L54.4 289.1L52.9 291.5L51.2 294.5L49.3 297.2L46.9 299.5L45 302.8L43.9 309.3L5.1 309.3L5.6 301.5L5.3 296.5L5.8 293.8L5.6 290.3L6.8 286.7L7.7 282.9L7.9 278.5L8.3 275L8.4 270.9L8.1 266.8L6 265L3.4 263L1.3 261.9L0 261.2L-2.3 259.9L-4.7 256.8L-6.6 252.9L-8.3 249.4ZM175.5 131.2L177.6 130.3L178.9 132.3L178.5 135.9L177.2 136.5L175.9 136.2L176.1 133.7ZM430.7 233.7L433 232.9L436.9 233.7L435.2 234.6L432 234.4ZM439.4 151.4L441.1 149.7L442.6 149.5L444.3 148.8L445.2 150.3L444.1 151.7L442.6 151L441.6 152.9L440.5 152.3ZM184.4 139.5L186.4 138.7L191.3 138.4L190.2 141.1L190.2 142.7L188.5 141.9L185.7 140.5ZM271.6 199.8L274.2 199.8L274 200.5L272.1 200.5ZM487.8 238.6L489.5 239.7L490.4 241.4L489.1 241ZM491.7 241.2L493.8 242.5L492.7 242.5ZM495.9 243.2L498.7 244.9L497.4 244.4ZM498.3 246.8L500.8 247.9L499.1 247.9ZM500.6 244.9L501.9 247L501 246.2ZM501.9 249L504 250.1L502.5 249.6ZM328.6 205.9L330.5 207.6L331.3 208.7L332.6 211.3L332.2 213L329.8 214.2L328.8 213.9L328.2 212.2L328.1 209.8L328.3 207.8ZM412.6 238L412.8 234.4L411.3 232.7L412.1 230.1L413.4 228.6L413.4 226.5L414.5 225L415.8 224.1L418.1 224.8L420.2 224.9L423 224.3L424.7 223.5L424.9 223.9L423.4 226L420.9 226.3L417 225.8L414.5 226L414.1 228.8L415.5 229.9L417.3 228.8L420 228.8L421.2 228.8L419.8 229.5L417.5 231L416.6 231.2L418.7 233.3L419.2 235.2L420.4 236.3L419.8 237.1L418.1 237.1L417 236.9L416 235.2L415.8 233.3L415.5 232.7L414.5 233.3L414.7 235.4L414.7 238.6L413 238.9ZM361.2 214.9L365.9 215.8L368.4 218.8L371.2 221.1L372.9 222.4L374.8 223.3L377.6 225.2L379.3 226.9L378.7 229L380.8 231L384 233.1L384 233.9L383.8 236.5L383.6 239.3L382.3 239.5L380.8 239.5L378.7 237.6L376.1 235.4L373.3 232.2L372.1 229L370.6 226.9L369.1 224.8L368.4 223.3L366.3 221.6L364.8 219.9L362.9 217.9L361.2 215.6ZM417 171.1L418.1 171.8L417.3 174.2L416.8 176.3L415.7 179L414.5 177.4L414.1 175.3L415.3 172.8ZM26 204L28.2 203.7L27.9 205.3L26 205.4ZM513.2 258.6L514.5 259.3L514.3 260.8L513.2 259.9ZM514.5 261.5L515.7 262.6L514.9 262.6ZM516.4 265L517.2 265.5L516.6 265.5ZM518.3 267.5L518.9 268.2L518.3 268.2ZM283.1 13L286.6 14.9L285.9 16.8L283.8 16.2ZM423 200L425.1 200L426 202.9L424.9 204.8L424.1 205L423.2 203.5L423.6 202.2ZM417.9 201.6L420.4 202.2L421.3 203.7L421.5 206.3L420.2 207.4L419 206.1L420 204.4L418.1 204.4ZM414.7 198.1L416.4 198.1L417 199.8L416.2 200.7L415.3 199.2ZM407.9 208.9L409.6 207L412.3 204.2L412.8 202.7L411.7 204.4L409.8 206.1L407.9 208.5ZM181.9 83.3L183.6 81.8L184.9 83.3L184 85.2L182.9 86.3L181.9 85.2Z"/>
<path fill="#aad3df" d="M282.3 116.8L283.6 116.5L284.4 118.6L283.8 121.3L282.5 121.3L282.7 119.2ZM286.3 115.3L288.1 113.7L289.8 114.7L288.1 116.2L286.8 116.2ZM379.3 98.4L381.4 97L385.1 94.6L388.9 91L391.5 85.9L392.3 82.9L390.8 83.3L389.5 87.4L386.6 92.1L383.6 94.9L380.4 97.4ZM314.7 118L316.2 115.6L319 114L323.2 114.3L326.9 114L326.4 115.3L323.2 115.3L319 115.3L317 117.4L315.8 118.9ZM259.3 125.2L261 128.1L262.7 130.3L263.7 132L265.5 132.6L263.5 133.4L263.3 135.4L262.3 137.8L262.5 140L265 141.1L267.2 142.6L270.1 142.8L272.9 142.2L273.1 140.5L272.7 137.8L272.3 135.6L271.4 134.8L270.8 133.7L270.4 131.2L271.4 130.9L273.8 130.9L274.6 129.2L273.1 127.8L271 128.3L270.8 128.9L269.7 127.2L270.1 125.8L268 124.6L267.2 123.1L266.3 121.6L265 120.4L266.7 119.8L267.2 118L269.9 118L271.4 118.3L271.4 115.3L271 113.4L268.9 112.8L266.7 113.1L263.5 114.3L262 115.3L260.3 116.8L259.1 118.3L257.8 120.1L258.8 122.8ZM320.5 126.8L322.6 125.9L324.9 125.9L324.3 127.2L322.2 127.6ZM223.9 66.5L225.2 65.6L228.1 64.7L228.4 61.7L225.2 59L222.6 59.9L222 62.6L223.7 63.9ZM230.5 247.2L231.8 249.4L231.6 251.6L232.8 254.4L233 257.7L232.2 257.7L231.8 254.9L230.7 252.2L230.5 249.4ZM311.5 -12.8L312.6 -3.8L313.2 5.2L312.8 11.8L313.6 18L314.9 23.4L313.6 28L311.5 32.4L309.4 34.6L311.1 36.2L313.2 34.6L315.3 30.2L317 25.1L320 26.8L323.2 29.1L324.9 28.5L322.2 23.4L319 21L316.2 19.8L315.8 11.8L316.4 5.2L317.9 -1.7L317.9 -12.8ZM231.6 62.1L233.7 61.7L235.6 59.9L234.3 55.9L232.2 54L231.3 55.9L233 58.1L232 59.9ZM220.5 234.2L221.3 236.5L220.9 239.7L222.8 242.5L224.3 245.3L223 245.1L221.5 242.5L219.8 239.7L220.3 236.5ZM234.5 217.3L235.2 217.7L236 221.1L235.2 221.6ZM248.4 137.8L250.1 136.5L251 137.6L249.7 138.4ZM184.7 71.9L186.1 72.7L187.8 70.6L187 69L185.5 69.4ZM225.6 228L227.3 226.3L230.1 226L231.6 227.3L230.5 229.5L230.1 231.6L228.1 232.7L226 232.2L225.8 229.9Z"/>
<path fill="none" stroke="#d3bfd0" stroke-width=".55" stroke-linejoin="round" d="M181.7 70.2L183.2 66.9L184.7 63.9L184 59.5L183.8 50.2L187.6 45.4L188.9 40.3L191 35.1L193.2 29.6L196.4 23.9L200.9 20.7L201.9 20.7L204.9 22.8L208.7 22.2L212.8 19.8L213.4 15.5L217.7 14.3L220.3 16.8L219.4 20.4L222.2 16.8L223.9 16.2M201.9 20.7L208.1 27.4L209 33.5L209.4 38.8M219.4 20.4L218.8 23.9L221.7 28.5L220 32.9L222.2 39.3L221.3 43.9L223 46.9L222 49.3L225.2 53.1L221.3 59.5L217.3 63.7M217.7 68.1L216.4 70.6L216.6 72.3L216.8 74.7L217.1 77.1L218.1 81.4L214.7 83.3L214.7 85.5L212.8 88.5L210 89.9L208.1 89.9L209 94.2L208.3 98.4L209.4 100.8L206.4 106.4L205.1 108.7M209.8 74.7L212.4 74.3L216.8 74.7M202.9 81.8L206.8 80.6L211.1 80.6L214.7 83.3M203.2 84.8L206.6 86.3L206.6 88.1L208.1 89.9M200 87.9L206.6 88.3M218.1 81.4L222.6 82.9L224.1 84L223.7 86.7L224.7 88.9L227.7 91.7L224.7 92.8L225.8 96.3L223.9 96.3L223.2 99.1L219.8 98.4L215.6 98L211.3 97L208.3 98.4M225.8 96.3L230.1 95.6L231.3 99.1L233.7 102.1L237.9 102.1L240.1 103.8L243.5 104.8L242.9 109.9L239.7 111.2L239.4 112.8M188.3 89.9L189.1 94.9L189.8 100.1L184 102.4L187.4 107.4L190 106.7L194 108L194.5 109.9L192.3 113.4L187.2 114.7L184.4 114L180.2 113.4L178.5 111.5L185.7 111.5L187.4 107.4M189.8 100.1L193.2 102.4L198.1 105.1L206.2 106.4M194 108L198.1 105.1M176.5 86.3L179.1 86.7M173.4 92.1L172.9 95.3L170.8 97.4L170.8 100.8L171.6 105.1L175.5 106.7L174.2 111.2L178.5 111.5M165.2 98.7L170.8 99.1M163.3 99.8L167 103.4L170.4 105.1L171.6 105.1M174.2 111.2L172.9 111.5L171 115.6L172.9 116.5L177.2 116.2L180.2 113.4M172.9 116.5L172.7 119.2L174 122.8M154.2 124.1L159.5 125.8L164.7 126.9M139.2 128.3L140.7 128.1L144.1 128.3L144.8 129.5L143.3 130.9L143.1 134.5L142 134.8L143.1 138.7L142.2 141.4M187 117.7L190.6 117.7L193.2 114.7L198.3 116.5L201.3 115.6L203.2 115L206.8 109.9L211.1 110.9L214.7 109L216.6 108.7L220 110.3L222.2 115L219.6 116.2L218.1 117.7L217.9 113.4L216 110.6L214.7 109M194.7 109.9L198.1 110.6L201.7 108.3L205.1 108.7L206.8 109.9M191.7 118.6L194.2 118.6L198.5 119.5L199.4 121.6L198.9 123.7L197.4 126.6M191.7 118.6L192.5 121.6L195.5 125.2L197.4 126.6M198.3 116.5L198.5 119.5M201.3 115.6L203.6 119.8L206 120.4L206.4 121.6L205.8 124.3L206.8 125.5L205.8 127.2L207 130.1L210.2 129.5L214.1 128.9L217.7 128.1M206.4 121.6L211.3 123.1L215.6 121.9L219 123.1M214.1 128.9L214.7 130.1L213.4 131.6M200.6 134.5L202.3 131.2L202.8 131.3L206.8 130.1M199.4 128.3L200.9 126.3L201.9 128.3L201.7 130.3L202.3 131.2M201.9 128.3L205.8 127.2M198.9 123.7L200.9 126.3M234.8 144.5L236.2 142.4L239 142.3L243.3 142.4L248.2 141.4L253.5 141.4L252.4 138.1L252 135.4L253.5 134.5L251.2 133.4L250.7 130.6L248.6 129.5L246.5 129.5M243.3 124L247.5 124.6L251.4 126.3L255 126.6L256.9 128.3L258.8 130.1L261.6 128.6M250.7 130.6L253.9 130.1L256.9 128.3M253.9 130.1L255.2 131.5L256.1 134.8L257.1 136.7M253.5 134.5L256.3 136.7L259.9 134.5L260.3 135.6L262.3 138.1M253.5 141.4L254.8 144.5L256.1 146.6L254.8 149.7L256.5 151.8L259.5 154.3L259.7 157.3L261.6 160M248.2 141.4L246.1 143.2L245.8 147.7L240.7 151.3L241.6 154.3L244.1 155.1L247.8 157.1L253.3 161.8L257.1 162L259.1 159.8L260.1 159.8M257.1 162L259.3 163.5L261.2 163.5M241.6 154.3L236.9 156.1L239 158.6L237.9 159.8L235 161.8L232.6 161.4M240.7 151.3L236.5 154.1L234.1 153.1L233.7 156.1L232.6 161M234.1 153.1L233.9 151.5L236 149.2L234.8 148.1M233.9 151.5L232.8 152M232.4 161L231 156.6M249.2 191.4L250.1 189.2L252.9 189.2L257.1 189.7L259.3 189.9L262.5 186.5L268.9 185.6L275.3 183.4L276.5 178.8L275.7 177.2L270.1 176.7L268 173.7M268.9 185.6L271.2 190.9M275.7 177.2L277 173.7L277.6 172.1L278.2 171.9M266.3 172.5L267.6 172.8M261.6 128.6L258.8 122.8M257.8 120.1L258.2 113.1L261.4 110.6L258.2 109.3L257.1 108.3L258.2 106.1L257.8 102.4L261.4 101.4L266.3 97.7L272.1 98.4L275.3 101.4L280.6 100.1L284.9 101.4L289.1 100.8L285.9 96.7L288.1 89.9L296.6 88.1L304 85.2L309.4 88.9L314.7 89.6L321.1 88.5L324.1 92.1L328.8 100.8L336 100.1L339.9 104.8L344.1 106.1M344.1 106.1L340.7 108.7L340.3 112.8L335 112.5L333.5 117.7L329.6 119.2L329 125.8L326.4 126.6L321.1 125.5L316.4 124.6L314.7 126.9L309.4 126.3L307.9 128.1L305.1 130.1L303 130.9L300 130.6L298.7 125.5L288.1 121L282.9 117.4L277.4 119.2L277.4 130.1L274.6 128.1L271 127.8M277.4 130.1L279.5 130.1L282.7 126.3L285.9 127.5L286.3 130.1L290 130.3L291 133.7L295.5 136.7L299.8 139.2L299.8 140.9M272.9 140.9L276.3 138.9L280.2 138.7L284.4 140.5L288.5 143L288.5 145.6L290.8 146.4L295.5 143.5L299.8 140.9L303 141.9L306.2 140.3L309.2 138.1L310.4 142.4L314.7 140.8L317.7 141.4M326.4 126.6L329 128.1L325.1 129.8L322 130.9L315.3 134.3L314.9 135.4L314.7 140.8M314.9 135.4L309.4 135.4L305.7 134L308.3 131.2L313.2 132L314.1 131.2L310.4 129.8L307.9 128.1M303 130.9L305.1 133.2L301.9 135.6L303.8 138.7L303 141.9M288.5 145.6L287.2 149L287.8 151L287.2 152L287.8 156.1L289.8 157.3L289.8 157.8L287.8 160.2L289.3 161.3L291.9 164L291.9 166.6L292.7 168L290 169L289.3 171.4M287.8 160.2L291.2 161.3L299.1 160.3L299.6 157.6L302.5 156.3L305.7 155.1L307.9 151.5L307 149.7L309.6 149.5L310.7 146.4L309.8 144.3L312.6 142.4L317.7 141.4M317.7 141.4L320 145.1L323.9 145.9L326.2 149L327.5 153.1L325.8 157.3L330.7 159.3L331.1 159.8M323.9 145.9L321.7 148.2L315.8 147.9L315.6 152.3L318.8 154.1L317 157.1L315.6 159.8L313.4 162.3L311.3 164.9L308.1 164.7L306.2 167.6L307.9 170.2L309.4 173.2L304.7 173.5L303.4 174.9M331.1 159.8L328.8 162.7L335.6 166.1L340.9 168L345.8 168.5L346 164.9L341.4 164.9L336 161.8L331.1 159.8M346 164.9L347.3 166.6L349.5 167.8L354.4 167.3L353.5 165.2L349 164.2L347.3 166.6M353.5 165.2L358 163L362.7 161.3L365.4 164.2L364.8 166.8L360.8 169.5L359.7 172.5L356.9 174.2L356.5 178.3L355.4 180.4L354.8 181.8M348 179.3L347.3 176L345.8 173L346.5 169.7L347.5 168.5L349.5 169.5L349.5 171.1L355 171.8L352.4 175.1L353.3 176.7L354.8 174.9L355.4 180.4M344.1 106.1L345.6 108L349.9 110.3L352 116.2L351.8 118.6L361.4 121.3L363.5 126L373.3 126.3L381.9 129.2L391.5 126.6L396.6 123.1L395.5 121L400.2 119.8L405.3 117.1L413.6 114L408.3 110.9L404.5 110.3L406.8 104.1M344.1 106.1L349.2 103.8L355 100.8L358.8 101.4L365.4 104.1L367.6 101.8L366.9 96.7L375.9 99.1L376.1 101.4L385.5 102.4L389.3 105.8L394 106.4L401.9 102.4L406.8 104.1L412.1 103.1L415.3 96.7L414.1 93.2L421.5 91.4L426.6 94.6L429.8 102.8L436.4 107.1L437.3 110.9L445.2 109L441.8 118.9L437.9 119.8L437.9 125.2L436.4 126.9M436.4 126.9L433 128.1L430.9 129.8L428.6 128.6L423.2 133.7M426.8 139.7L428.8 138.4L431.7 137.6M329 128.1L329 125.8M315.3 134.3L314.9 135.4M365.4 164.2L368.4 165.9L368.4 169.9L366.1 174.2L368.9 176L370.1 178.6L373.8 180.6L375 180.6L375.9 177.9L379.7 177.6L382.5 175.8L385.5 176.7L386.1 179L388.3 179.9M373.8 180.6L371.4 182.7L372.5 184.5L373.8 184.5L373.3 188.8L375.7 187.4L378.4 187L381.2 189L381.4 191.7L383.1 193.9L383.1 195.9L385.1 195.7L387.2 195.2L387.4 193.9L386.1 191.4L382.3 187.2L379.5 185L381.6 182.9L379.7 181.3L375.9 177.9M371.4 182.7L369.1 183.1L366.5 186.5L368.2 192.1L367.4 194.3L369.5 197.4L370.3 201.6L368.6 205M383.1 195.9L381.4 195.9L377.6 196.1L376.3 197.6L377.4 201.8M387.2 195.2L387.2 200.5L383.6 202L384 203.5L380.8 204.6M371.4 213L373.5 214.7L375.7 213.7M391.7 222.6L391.9 224.8L394.7 224.8L397.2 223.9L400.4 224.3L402.8 222.8L402.3 220.7L404.5 219.6L405.1 217.7L408.7 217.9M458.6 232.4L458.6 246.4M424.4 246L424.7 247M211.6 155.8L210.7 159.3L211.3 161.8L211.3 178.8L224.7 178.8L236.7 178.8M211.3 178.8L211.3 183.4L209.2 183.4L209.2 184.5L192.1 175.4L190 176.5L188.3 177.4L183.5 175.3L180 173L179.1 169L178.3 159.3L180 155.6L182.5 153.6L182.6 151.9M178.3 159.3L177.2 154.6L174 150L175.7 146.6L176.3 142.2M153.3 146.9L154.4 150.5L155.7 153.8L151.6 155.6L150.1 157.6L146.9 160.3L143.1 161L139.5 163L139.5 165.5L129.9 165.5M139.5 165.5L139.5 169.5L132.4 169.5L132.4 175.4L130.1 177L130.3 180.3L121.9 180.3M139.5 166.4L147.7 171.8L161.8 182L165 185.6L167 185.2L170.4 184.5L183.5 175.3M147.7 171.8L144.1 171.8L146.1 191.2L146.7 193.4L138.2 193.4L135.2 193.7L133.5 193.2L132 195L130.5 194.1L127.5 191L123.2 191.2L122.8 192.1M132 195L133.7 200.3L128.8 199.8L122.4 200.4M122.2 197.6L126 197.2L128.6 198.1L126 198.5L122.2 198.7M128.8 199.8L128.8 201.8L126.7 202.2L126 203.5M133.7 200.3L135.2 201.3L138.8 200.3L140.3 203.3L140.9 205L141.2 207.6L139.9 210.6L142 214.5L142 217.5M129.6 207.6L131.3 205.7L134.1 205.5L135.4 207.4L136 208.7L133.5 212.2M136 208.7L138 211.1L139.9 210.6M140.9 205L144.8 204.2L146.3 204.6L148 206.1L152 206.1L152.2 210L151.2 212.4L152 216M146.3 204.6L146.9 201.8L148.6 200.5L149.5 198.1L151.8 196.8L153.7 195.4L156.5 194.3L158.4 194.8L160.1 198.1L162.7 199.8L163.1 201.3L160.1 203.3L157.8 203.1L152 203.3L152 206.1M157.8 203.1L159.3 208.9L159.3 212.2L160.6 213.9M160.1 203.3L161.4 207.6L161.4 213.7M163.1 201.3L165.7 201.8L165.7 205.5L163.8 209.8L163.8 213.2M158.4 194.8L160.8 193.9L165.5 193.7L167 190.3L167 185.2M165.7 201.8L166.7 197.8L170.8 197.4L174.6 198.3L179.3 198.3L184.7 198.7L187 197.4L186.8 195.9L191 190.3L190 176.5M187 197.4L188.3 200.3L189.1 202.2L187.4 203.3L185.3 208.3L182.3 212.8L180 212.2L177.2 214.3L176.3 216.7M190 200.9L190.2 203.7L191 205.7L187.6 206.3L190.8 210.6L188.9 213.9L189.1 216.2L192.1 222L192.3 223.3M191 205.7L197.7 209.6L201.5 207.4L206.8 203.3L206 199.8L204.5 199.6L206 196.5L209.2 193L209.2 184.5M208.3 206.3L210.2 208.1L211.5 204.8L217.5 206.3L220.9 205.9L224.7 206.1L227.7 201.1L228.8 200.7L230.3 206.6L230.7 208.9L228.4 210.2L233.3 215.4L234.5 217.1M235.8 196.1L235 199.6L232.8 201.6L232.4 203.7L231.1 204.2L230.7 208.9M235.8 196.1L236.9 190.1L240.3 187.9M248.4 200L247.1 203.3L249.5 203.4M249.5 203.4L251.8 207.6L258.2 209.8L260.3 209.8L253.9 216.2L249.7 216.7L247.5 217.9L245.4 218.5L242.2 219.6L239.2 219.2L236.7 217.5L234.5 217.1M234.5 217.1L230.5 217.9L229.4 218.8L224.1 219L223 218.6L220.9 217.1L216.4 216.2M230.5 217.9L232.6 222.8L230.5 226.5L230.3 229L238.2 233.3L241.6 236.9M230.3 229L223.7 229L221.1 229.9M224.1 219L224.7 222.2L221.3 225.2L221.1 229.9L219.8 232.4L220.5 236.3M219.8 232.4L223 232L223.7 233.9L220.7 236.3M216.4 216.2L211.9 216.2L205.8 218.2L199.6 216L197.7 217.7L197.7 219.4L195.7 228L192.5 231.6L191.9 235.2L188.7 237.4L186.6 237.4L184 239.3M192.3 223.3L186.1 222.2L182.1 222.2L178.9 222M182.1 222.2L182.1 224.8L178.9 224.8M186.1 222.2L188.7 224.8L188.7 231L184.9 231.8L181.7 235.2M184 239.3L185.7 239.5L193.4 239.5L195.5 244.2L199.4 244L200.6 241.9L204.5 242.5L204.9 250.9L209.2 250.3L209.2 254.9L204.9 254.9L204.9 261.9L207.9 265L203.6 265.9L198.5 265.5L187.8 264.6L183.2 264.1M209.2 250.3L212.2 251.8L216 251.8L219.8 255.7L221.5 255.7L221.5 253.1L218.5 252.2L219 246.6L223.7 244.4M223.7 244.4L228.1 247L228.4 250.5L227.7 256.2L222.4 258.8L222.8 260.6L219.6 261.5L215.6 265.7L211.9 265.5M223.7 244.4L224.5 245.3M228.1 247L230.5 247.2M231.8 251.8L234.3 251.4L237.9 252L244.1 249.2M227.7 256.2L228.8 257L231.3 257.9L231.8 261.5L233.3 263.9L234.5 259L232.4 256M222.8 260.6L227.9 263L228.1 267L227.3 273.4L224.7 275.9L220.7 275.5L217.7 274.1L217.1 271.6L213.9 269.8L211.9 265.5M203.6 265.9L202.8 266.6L202.8 275L200.6 275L200.6 290.1L198.5 291.3L195.1 290.8L193.2 290.6M200.6 281.5L202.3 286.2L206.2 284.6L207 282.7L212.6 283.2L215.4 278.9L220.7 275.5M226.2 286.2L224.1 287.2L223.7 285.5L226 284.1M215.6 293L217.7 291.3L220.5 291.8L220.3 293.8L217.7 295.5L216 294.5L215.6 293M6 201.6L2.8 205.5L3.6 208.9L4.5 211.9L8.5 211.9L10 213.9L14.1 213.7L14.5 219.6L13.5 220.9L15.2 224.3L15.4 224.3M9 235.9L2.6 237.8L0.4 242.5L2.4 247L4.1 248.3L7.7 247L7.5 250.5L9.6 250.5M9 235.9L7.9 232.2L2.6 232L-2.5 227.1M15.4 224.3L18.4 225.2L21.1 223.7L22.8 222L20.3 218.2L24.1 218.4L28.6 215.8L27.1 214.3L27.7 212.6L30.1 208.7M28.6 215.8L30.3 216.2L30.9 218.6L30.3 222L32.4 224.1L35.8 222.6L38.6 223.1L41.6 222L45.2 222.2L47.8 218.4M36.3 214.3L34.6 216.7L35.4 219.9L37.5 222.8M42.9 214.7L42 218.4L41.6 222M9.6 250.5L11.5 253.8L10.5 259.9L9.8 264.8L7.9 266.6M9.6 250.5L16 248.1L18.8 247.9L19.4 252.7L24.1 254.9L29 256.6L29.7 262.1L33.5 262.1L33.7 264.6L35.4 266.4L33.9 270M9.8 264.8L11.5 269.3L12.6 273.9L14.7 276.8M14.7 276.8L16.9 274.5L20.9 276.8L24.5 275.5L30.1 279.6L35.2 283.4L33.1 287.2L38 287.7L41.6 283.4M24.5 275.5L25.4 271.6L26.2 269.5L32 268.8L33.9 270L34.6 275.2L39 275.7L39.9 279.6L42.2 279.9L41.6 283.4M14.7 276.8L14.5 279.6L12 281.5L12.4 286.5L9.4 290.3L8.8 295L8.1 299L8.8 302.3M41.6 283.4L43.3 287L39 289.8L35.2 294.5L38.8 296.5L42.9 298.7L44.2 303.3M35.2 294.5L33.9 300.2L33.5 304.1M5 184L5.1 186.5L4.9 187.9M15.2 119.5L13.5 117.1L13.5 112.8L10.5 111.8L8.8 114L8.1 116.5L5.8 118.6L-1.3 119.2L-5.1 121.6"/>
</svg>
<svg width="522" height="300" viewBox="0 0 522 300" style="position:absolute;left:0;top:0"><style>.h{fill:#fff;stroke:#fff;stroke-width:2.6px;stroke-linejoin:round}.f{fill:#000;stroke:#000;stroke-width:.25px}</style><g><circle cx="33.5" cy="305.6" r="10.5" fill="#00d600" fill-opacity=".8" stroke="#00d600" stroke-opacity=".45" stroke-width="1.3"/><circle cx="-6.2" cy="253.6" r="10.5" fill="#ffff00" fill-opacity=".8" stroke="#ffff00" stroke-opacity=".45" stroke-width="1.3"/><circle cx="0.1" cy="216.6" r="10.5" fill="#ffff00" fill-opacity=".8" stroke="#ffff00" stroke-opacity=".45" stroke-width="1.3"/><circle cx="10.6" cy="200.2" r="10.5" fill="#999999" fill-opacity=".8" stroke="#999999" stroke-opacity=".45" stroke-width="1.3"/><circle cx="164.6" cy="142.2" r="10.5" fill="#ffff00" fill-opacity=".8" stroke="#ffff00" stroke-opacity=".45" stroke-width="1.3"/><circle cx="204.8" cy="128.0" r="10.5" fill="#ffff00" fill-opacity=".8" stroke="#ffff00" stroke-opacity=".45" stroke-width="1.3"/><circle cx="196.9" cy="122.9" r="10.5" fill="#00d600" fill-opacity=".8" stroke="#00d600" stroke-opacity=".45" stroke-width="1.3"/><circle cx="194.8" cy="120.4" r="10.5" fill="#ffff00" fill-opacity=".8" stroke="#ffff00" stroke-opacity=".45" stroke-width="1.3"/><circle cx="220.1" cy="112.9" r="10.5" fill="#00d600" fill-opacity=".8" stroke="#00d600" stroke-opacity=".45" stroke-width="1.3"/><circle cx="128.6" cy="205.4" r="10.5" fill="#999999" fill-opacity=".8" stroke="#999999" stroke-opacity=".45" stroke-width="1.3"/><circle cx="140.8" cy="198.8" r="10.5" fill="#999999" fill-opacity=".8" stroke="#999999" stroke-opacity=".45" stroke-width="1.3"/><circle cx="147.4" cy="214.3" r="10.5" fill="#ff0000" fill-opacity=".8" stroke="#ff0000" stroke-opacity=".45" stroke-width="1.3"/><circle cx="156.2" cy="214.3" r="10.5" fill="#ff0000" fill-opacity=".8" stroke="#ff0000" stroke-opacity=".45" stroke-width="1.3"/><circle cx="166.1" cy="212.8" r="10.5" fill="#ff0000" fill-opacity=".8" stroke="#ff0000" stroke-opacity=".45" stroke-width="1.3"/><circle cx="173.8" cy="206.1" r="10.5" fill="#999999" fill-opacity=".8" stroke="#999999" stroke-opacity=".45" stroke-width="1.3"/><circle cx="190.3" cy="201.0" r="10.5" fill="#ff0000" fill-opacity=".8" stroke="#ff0000" stroke-opacity=".45" stroke-width="1.3"/><circle cx="178.2" cy="225.3" r="10.5" fill="#ffff00" fill-opacity=".8" stroke="#ffff00" stroke-opacity=".45" stroke-width="1.3"/><circle cx="227.8" cy="192.7" r="10.5" fill="#ffff00" fill-opacity=".8" stroke="#ffff00" stroke-opacity=".45" stroke-width="1.3"/><circle cx="241.0" cy="206.5" r="10.5" fill="#ffff00" fill-opacity=".8" stroke="#ffff00" stroke-opacity=".45" stroke-width="1.3"/><circle cx="226.7" cy="225.3" r="10.5" fill="#ff0000" fill-opacity=".8" stroke="#ff0000" stroke-opacity=".45" stroke-width="1.3"/><circle cx="236.6" cy="228.8" r="10.5" fill="#ffff00" fill-opacity=".8" stroke="#ffff00" stroke-opacity=".45" stroke-width="1.3"/><circle cx="259.3" cy="268.5" r="10.5" fill="#00d600" fill-opacity=".8" stroke="#00d600" stroke-opacity=".45" stroke-width="1.3"/><circle cx="235.0" cy="155.0" r="10.5" fill="#999999" fill-opacity=".8" stroke="#999999" stroke-opacity=".45" stroke-width="1.3"/><circle cx="252.4" cy="150.2" r="10.5" fill="#999999" fill-opacity=".8" stroke="#999999" stroke-opacity=".45" stroke-width="1.3"/><circle cx="241.8" cy="179.9" r="10.5" fill="#ff0000" fill-opacity=".8" stroke="#ff0000" stroke-opacity=".45" stroke-width="1.3"/><circle cx="260.5" cy="161.3" r="10.5" fill="#ffff00" fill-opacity=".8" stroke="#ffff00" stroke-opacity=".45" stroke-width="1.3"/><circle cx="256.8" cy="171.8" r="10.5" fill="#999999" fill-opacity=".8" stroke="#999999" stroke-opacity=".45" stroke-width="1.3"/><circle cx="266.6" cy="168.0" r="10.5" fill="#999999" fill-opacity=".8" stroke="#999999" stroke-opacity=".45" stroke-width="1.3"/><circle cx="274.2" cy="172.8" r="10.5" fill="#00d600" fill-opacity=".8" stroke="#00d600" stroke-opacity=".45" stroke-width="1.3"/><circle cx="276.2" cy="171.2" r="10.5" fill="#ffff00" fill-opacity=".8" stroke="#ffff00" stroke-opacity=".45" stroke-width="1.3"/><circle cx="282.8" cy="138.9" r="10.5" fill="#00d600" fill-opacity=".8" stroke="#00d600" stroke-opacity=".45" stroke-width="1.3"/><circle cx="309.5" cy="100.8" r="10.5" fill="#00d600" fill-opacity=".8" stroke="#00d600" stroke-opacity=".45" stroke-width="1.3"/><circle cx="304.9" cy="128.3" r="10.5" fill="#ff7e00" fill-opacity=".8" stroke="#ff7e00" stroke-opacity=".45" stroke-width="1.3"/><circle cx="304.9" cy="137.9" r="10.5" fill="#ffff00" fill-opacity=".8" stroke="#ffff00" stroke-opacity=".45" stroke-width="1.3"/><circle cx="315.7" cy="124.6" r="10.5" fill="#ff0000" fill-opacity=".8" stroke="#ff0000" stroke-opacity=".45" stroke-width="1.3"/><circle cx="322.6" cy="124.8" r="10.5" fill="#ff7e00" fill-opacity=".8" stroke="#ff7e00" stroke-opacity=".45" stroke-width="1.3"/><circle cx="314.2" cy="150.0" r="10.5" fill="#ff0000" fill-opacity=".8" stroke="#ff0000" stroke-opacity=".45" stroke-width="1.3"/><circle cx="316.6" cy="155.7" r="10.5" fill="#ff0000" fill-opacity=".8" stroke="#ff0000" stroke-opacity=".45" stroke-width="1.3"/><circle cx="310.5" cy="149.5" r="10.5" fill="#999999" fill-opacity=".8" stroke="#999999" stroke-opacity=".45" stroke-width="1.3"/><circle cx="323.4" cy="162.9" r="10.5" fill="#ff0000" fill-opacity=".8" stroke="#ff0000" stroke-opacity=".45" stroke-width="1.3"/><circle cx="300.8" cy="171.8" r="10.5" fill="#ffff00" fill-opacity=".8" stroke="#ffff00" stroke-opacity=".45" stroke-width="1.3"/><circle cx="313.4" cy="184.8" r="10.5" fill="#ffff00" fill-opacity=".8" stroke="#ffff00" stroke-opacity=".45" stroke-width="1.3"/><circle cx="326.0" cy="188.2" r="10.5" fill="#ff7e00" fill-opacity=".8" stroke="#ff7e00" stroke-opacity=".45" stroke-width="1.3"/><circle cx="329.5" cy="198.2" r="10.5" fill="#ffff00" fill-opacity=".8" stroke="#ffff00" stroke-opacity=".45" stroke-width="1.3"/><circle cx="328.3" cy="211.4" r="10.5" fill="#ffff00" fill-opacity=".8" stroke="#ffff00" stroke-opacity=".45" stroke-width="1.3"/><circle cx="339.7" cy="165.2" r="10.5" fill="#ffff00" fill-opacity=".8" stroke="#ffff00" stroke-opacity=".45" stroke-width="1.3"/><circle cx="350.5" cy="174.8" r="10.5" fill="#ff0000" fill-opacity=".8" stroke="#ff0000" stroke-opacity=".45" stroke-width="1.3"/><circle cx="344.9" cy="176.8" r="10.5" fill="#ff0000" fill-opacity=".8" stroke="#ff0000" stroke-opacity=".45" stroke-width="1.3"/><circle cx="363.6" cy="189.2" r="10.5" fill="#ffff00" fill-opacity=".8" stroke="#ffff00" stroke-opacity=".45" stroke-width="1.3"/><circle cx="376.5" cy="187.8" r="10.5" fill="#ffff00" fill-opacity=".8" stroke="#ffff00" stroke-opacity=".45" stroke-width="1.3"/><circle cx="384.3" cy="180.2" r="10.5" fill="#ffff00" fill-opacity=".8" stroke="#ffff00" stroke-opacity=".45" stroke-width="1.3"/><circle cx="399.2" cy="176.0" r="10.5" fill="#999999" fill-opacity=".8" stroke="#999999" stroke-opacity=".45" stroke-width="1.3"/><circle cx="385.1" cy="203.8" r="10.5" fill="#ff7e00" fill-opacity=".8" stroke="#ff7e00" stroke-opacity=".45" stroke-width="1.3"/><circle cx="385.6" cy="240.0" r="10.5" fill="#ffff00" fill-opacity=".8" stroke="#ffff00" stroke-opacity=".45" stroke-width="1.3"/><circle cx="386.3" cy="109.6" r="10.5" fill="#ffff00" fill-opacity=".8" stroke="#ffff00" stroke-opacity=".45" stroke-width="1.3"/><circle cx="405.9" cy="133.4" r="10.5" fill="#ffff00" fill-opacity=".8" stroke="#ffff00" stroke-opacity=".45" stroke-width="1.3"/><circle cx="421.4" cy="129.1" r="10.5" fill="#ff7e00" fill-opacity=".8" stroke="#ff7e00" stroke-opacity=".45" stroke-width="1.3"/><circle cx="417.5" cy="156.0" r="10.5" fill="#00d600" fill-opacity=".8" stroke="#00d600" stroke-opacity=".45" stroke-width="1.3"/></g><g font-family="Liberation Sans, Arial, sans-serif" font-size="9.3" text-anchor="middle"><text class="h" x="0.1" y="218.8">56</text><text class="f" x="0.1" y="218.8">56</text><text class="h" x="10.6" y="202.4">N/A</text><text class="f" x="10.6" y="202.4">N/A</text><text class="h" x="164.6" y="144.4">59</text><text class="f" x="164.6" y="144.4">59</text><text class="h" x="204.8" y="130.2">35</text><text class="f" x="204.8" y="130.2">35</text><text class="h" x="196.9" y="125.1">38</text><text class="f" x="196.9" y="125.1">38</text><text class="h" x="194.8" y="122.6">53</text><text class="f" x="194.8" y="122.6">53</text><text class="h" x="220.1" y="115.1">49</text><text class="f" x="220.1" y="115.1">49</text><text class="h" x="128.6" y="207.6">N/A</text><text class="f" x="128.6" y="207.6">N/A</text><text class="h" x="140.8" y="201.0">N/A</text><text class="f" x="140.8" y="201.0">N/A</text><text class="h" x="147.4" y="216.5">151</text><text class="f" x="147.4" y="216.5">151</text><text class="h" x="156.2" y="216.5">155</text><text class="f" x="156.2" y="216.5">155</text><text class="h" x="166.1" y="215.0">164</text><text class="f" x="166.1" y="215.0">164</text><text class="h" x="173.8" y="208.3">N/A</text><text class="f" x="173.8" y="208.3">N/A</text><text class="h" x="190.3" y="203.2">159</text><text class="f" x="190.3" y="203.2">159</text><text class="h" x="178.2" y="227.5">76</text><text class="f" x="178.2" y="227.5">76</text><text class="h" x="227.8" y="194.9">84</text><text class="f" x="227.8" y="194.9">84</text><text class="h" x="241.0" y="208.7">68</text><text class="f" x="241.0" y="208.7">68</text><text class="h" x="226.7" y="227.5">159</text><text class="f" x="226.7" y="227.5">159</text><text class="h" x="236.6" y="231.0">59</text><text class="f" x="236.6" y="231.0">59</text><text class="h" x="259.3" y="270.7">6</text><text class="f" x="259.3" y="270.7">6</text><text class="h" x="235.0" y="157.2">N/A</text><text class="f" x="235.0" y="157.2">N/A</text><text class="h" x="252.4" y="152.4">N/A</text><text class="f" x="252.4" y="152.4">N/A</text><text class="h" x="241.8" y="182.1">156</text><text class="f" x="241.8" y="182.1">156</text><text class="h" x="260.5" y="163.5">64</text><text class="f" x="260.5" y="163.5">64</text><text class="h" x="256.8" y="174.0">N/A</text><text class="f" x="256.8" y="174.0">N/A</text><text class="h" x="266.6" y="170.2">N/A</text><text class="f" x="266.6" y="170.2">N/A</text><text class="h" x="274.2" y="175.0">52</text><text class="f" x="274.2" y="175.0">52</text><text class="h" x="276.2" y="173.4">62</text><text class="f" x="276.2" y="173.4">62</text><text class="h" x="282.8" y="141.1">22</text><text class="f" x="282.8" y="141.1">22</text><text class="h" x="304.9" y="130.5">110</text><text class="f" x="304.9" y="130.5">110</text><text class="h" x="304.9" y="140.1">73</text><text class="f" x="304.9" y="140.1">73</text><text class="h" x="315.7" y="126.8">157</text><text class="f" x="315.7" y="126.8">157</text><text class="h" x="322.6" y="127.0">116</text><text class="f" x="322.6" y="127.0">116</text><text class="h" x="314.2" y="152.2">153</text><text class="f" x="314.2" y="152.2">153</text><text class="h" x="316.6" y="157.9">157</text><text class="f" x="316.6" y="157.9">157</text><text class="h" x="310.5" y="151.7">N/A</text><text class="f" x="310.5" y="151.7">N/A</text><text class="h" x="323.4" y="165.1">163</text><text class="f" x="323.4" y="165.1">163</text><text class="h" x="300.8" y="174.0">84</text><text class="f" x="300.8" y="174.0">84</text><text class="h" x="313.4" y="187.0">69</text><text class="f" x="313.4" y="187.0">69</text><text class="h" x="326.0" y="190.4">146</text><text class="f" x="326.0" y="190.4">146</text><text class="h" x="329.5" y="200.4">80</text><text class="f" x="329.5" y="200.4">80</text><text class="h" x="328.3" y="213.6">66</text><text class="f" x="328.3" y="213.6">66</text><text class="h" x="339.7" y="167.4">67</text><text class="f" x="339.7" y="167.4">67</text><text class="h" x="350.5" y="177.0">160</text><text class="f" x="350.5" y="177.0">160</text><text class="h" x="344.9" y="179.0">175</text><text class="f" x="344.9" y="179.0">175</text><text class="h" x="363.6" y="191.4">55</text><text class="f" x="363.6" y="191.4">55</text><text class="h" x="376.5" y="190.0">75</text><text class="f" x="376.5" y="190.0">75</text><text class="h" x="384.3" y="182.4">74</text><text class="f" x="384.3" y="182.4">74</text><text class="h" x="399.2" y="178.2">N/A</text><text class="f" x="399.2" y="178.2">N/A</text><text class="h" x="385.1" y="206.0">113</text><text class="f" x="385.1" y="206.0">113</text><text class="h" x="385.6" y="242.2">61</text><text class="f" x="385.6" y="242.2">61</text><text class="h" x="386.3" y="111.8">81</text><text class="f" x="386.3" y="111.8">81</text><text class="h" x="405.9" y="135.6">54</text><text class="f" x="405.9" y="135.6">54</text><text class="h" x="421.4" y="131.3">146</text><text class="f" x="421.4" y="131.3">146</text><text class="h" x="417.5" y="158.2">34</text><text class="f" x="417.5" y="158.2">34</text></g></svg>
</div>
<div class="abs" id="poptip"></div>
<div class="abs" id="pop"><div style="padding-top:11px">Bishkek<br>2022-02-08 6:00 PM<br><span style="position:relative;top:-1px">(LT)</span></div>
<table><tr><th style="width:60.5px">Pollutant</th><th>AQI</th></tr><tr><td>PM2.5</td><td style="background:#ff0000;color:#fff;font-weight:bold">157</td></tr></table></div>
<div class="abs ph" style="top:3px">Select a City</div>
<div class="abs sel" style="top:31.7px">Bishkek<span class="x">×</span><span class="a"></span></div>
<div class="abs ph" style="top:74px">Select a Parameter</div>
<div class="abs sel" style="top:102.7px">PM2.5<span class="x">×</span><span class="a"></span></div>
<div class="abs" id="rss"><div class="n">Bishkek</div><svg width="26" height="26" viewBox="0 0 26 26" style="position:absolute;left:214px;top:18px">
<rect width="26" height="26" fill="#f5b335"/>
<circle cx="5.6" cy="20.2" r="2.6" fill="#fff"/>
<path d="M3 11.8A11 11 0 0 1 14 22.8" fill="none" stroke="#fff" stroke-width="4.4"/>
<path d="M3 4.8A18 18 0 0 1 21 22.8" fill="none" stroke="#fff" stroke-width="4.1"/>
</svg></div>
<div class="abs" id="note">Note: Values above 500 are considered Beyond the AQI. Follow<br>recommendations for the Hazardous category. Additional<br>information on reducing exposure to extremely high levels of particle<br>pollution is available <b>here</b>.</div>
<div class="abs tab on" style="left:10px;width:81px">AQI</div>
<div class="abs tab" style="left:94px;width:124px">Concentration</div>
<div class="abs tab" style="left:220px;width:104px">Historical</div>
<div class="abs" id="tabline"></div>
<div class="abs" id="learn">Learn more about how the Air Quality Index [AQI] is calculated from the EPA <b>here</b>.</div>
<div class="abs" id="chart"><svg width="596" height="248" viewBox="0 0 596 248" style="position:absolute;left:0;top:0" font-family="DejaVu Sans, Verdana, sans-serif"><line x1="56.0" x2="588.0" y1="157.08" y2="157.08" stroke="#e6e6e6" stroke-width="1"/><line x1="56.0" x2="588.0" y1="129.36" y2="129.36" stroke="#e6e6e6" stroke-width="1"/><line x1="56.0" x2="588.0" y1="101.64" y2="101.64" stroke="#e6e6e6" stroke-width="1"/><line x1="56.0" x2="588.0" y1="73.92" y2="73.92" stroke="#e6e6e6" stroke-width="1"/><line x1="56.0" x2="588.0" y1="46.20" y2="46.20" stroke="#e6e6e6" stroke-width="1"/><text x="44.2" y="186.7" font-size="7.6" text-anchor="end" fill="#222">0</text><text x="44.2" y="159.0" font-size="7.6" text-anchor="end" fill="#222">100</text><text x="44.2" y="131.3" font-size="7.6" text-anchor="end" fill="#222">200</text><text x="44.2" y="103.5" font-size="7.6" text-anchor="end" fill="#222">300</text><text x="44.2" y="75.8" font-size="7.6" text-anchor="end" fill="#222">400</text><text x="44.2" y="49.0" font-size="7.6" text-anchor="end" fill="#222">500</text><rect x="62.03" y="172.60" width="10.80" height="12.20" fill="#00e400" stroke="#3a3a1a" stroke-width=".9"/><rect x="84.20" y="169.55" width="10.80" height="15.25" fill="#ffff00" stroke="#3a3a1a" stroke-width=".9"/><rect x="106.37" y="168.45" width="10.80" height="16.35" fill="#ffff00" stroke="#3a3a1a" stroke-width=".9"/><rect x="128.53" y="168.45" width="10.80" height="16.35" fill="#ffff00" stroke="#3a3a1a" stroke-width=".9"/><rect x="150.70" y="165.95" width="10.80" height="18.85" fill="#ffff00" stroke="#3a3a1a" stroke-width=".9"/><rect x="172.87" y="163.46" width="10.80" height="21.34" fill="#ffff00" stroke="#3a3a1a" stroke-width=".9"/><rect x="195.03" y="161.52" width="10.80" height="23.28" fill="#ffff00" stroke="#3a3a1a" stroke-width=".9"/><rect x="217.20" y="163.46" width="10.80" height="21.34" fill="#ffff00" stroke="#3a3a1a" stroke-width=".9"/><rect x="239.37" y="166.78" width="10.80" height="18.02" fill="#ffff00" stroke="#3a3a1a" stroke-width=".9"/><rect x="261.53" y="160.13" width="10.80" height="24.67" fill="#ffff00" stroke="#3a3a1a" stroke-width=".9"/><rect x="283.70" y="157.08" width="10.80" height="27.72" fill="#ffff00" stroke="#3a3a1a" stroke-width=".9"/><rect x="305.87" y="157.63" width="10.80" height="27.17" fill="#ffff00" stroke="#3a3a1a" stroke-width=".9"/><rect x="328.03" y="159.30" width="10.80" height="25.50" fill="#ffff00" stroke="#3a3a1a" stroke-width=".9"/><rect x="350.20" y="166.23" width="10.80" height="18.57" fill="#ffff00" stroke="#3a3a1a" stroke-width=".9"/><rect x="372.37" y="166.23" width="10.80" height="18.57" fill="#ffff00" stroke="#3a3a1a" stroke-width=".9"/><rect x="394.53" y="165.40" width="10.80" height="19.40" fill="#ffff00" stroke="#3a3a1a" stroke-width=".9"/><rect x="416.70" y="166.23" width="10.80" height="18.57" fill="#ffff00" stroke="#3a3a1a" stroke-width=".9"/><rect x="438.87" y="164.56" width="10.80" height="20.24" fill="#ffff00" stroke="#3a3a1a" stroke-width=".9"/><rect x="461.03" y="164.56" width="10.80" height="20.24" fill="#ffff00" stroke="#3a3a1a" stroke-width=".9"/><rect x="483.20" y="166.78" width="10.80" height="18.02" fill="#ffff00" stroke="#3a3a1a" stroke-width=".9"/><rect x="505.37" y="165.40" width="10.80" height="19.40" fill="#ffff00" stroke="#3a3a1a" stroke-width=".9"/><rect x="527.53" y="146.27" width="10.80" height="38.53" fill="#ff7e00" stroke="#3a3a1a" stroke-width=".9"/><rect x="549.70" y="141.83" width="10.80" height="42.97" fill="#ff0000" stroke="#3a3a1a" stroke-width=".9"/><rect x="571.87" y="141.28" width="10.80" height="43.52" fill="#ff0000" stroke="#3a3a1a" stroke-width=".9"/><line x1="56.0" x2="588.0" y1="184.80" y2="184.80" stroke="#e4e8f3" stroke-width="1"/><line x1="56.00" x2="56.00" y1="184.80" y2="191.80" stroke="#d3daee" stroke-width="1"/><line x1="78.17" x2="78.17" y1="184.80" y2="191.80" stroke="#d3daee" stroke-width="1"/><line x1="100.33" x2="100.33" y1="184.80" y2="191.80" stroke="#d3daee" stroke-width="1"/><line x1="122.50" x2="122.50" y1="184.80" y2="191.80" stroke="#d3daee" stroke-width="1"/><line x1="144.67" x2="144.67" y1="184.80" y2="191.80" stroke="#d3daee" stroke-width="1"/><line x1="166.83" x2="166.83" y1="184.80" y2="191.80" stroke="#d3daee" stroke-width="1"/><line x1="189.00" x2="189.00" y1="184.80" y2="191.80" stroke="#d3daee" stroke-width="1"/><line x1="211.17" x2="211.17" y1="184.80" y2="191.80" stroke="#d3daee" stroke-width="1"/><line x1="233.33" x2="233.33" y1="184.80" y2="191.80" stroke="#d3daee" stroke-width="1"/><line x1="255.50" x2="255.50" y1="184.80" y2="191.80" stroke="#d3daee" stroke-width="1"/><line x1="277.67" x2="277.67" y1="184.80" y2="191.80" stroke="#d3daee" stroke-width="1"/><line x1="299.83" x2="299.83" y1="184.80" y2="191.80" stroke="#d3daee" stroke-width="1"/><line x1="322.00" x2="322.00" y1="184.80" y2="191.80" stroke="#d3daee" stroke-width="1"/><line x1="344.17" x2="344.17" y1="184.80" y2="191.80" stroke="#d3daee" stroke-width="1"/><line x1="366.33" x2="366.33" y1="184.80" y2="191.80" stroke="#d3daee" stroke-width="1"/><line x1="388.50" x2="388.50" y1="184.80" y2="191.80" stroke="#d3daee" stroke-width="1"/><line x1="410.67" x2="410.67" y1="184.80" y2="191.80" stroke="#d3daee" stroke-width="1"/><line x1="432.83" x2="432.83" y1="184.80" y2="191.80" stroke="#d3daee" stroke-width="1"/><line x1="455.00" x2="455.00" y1="184.80" y2="191.80" stroke="#d3daee" stroke-width="1"/><line x1="477.17" x2="477.17" y1="184.80" y2="191.80" stroke="#d3daee" stroke-width="1"/><line x1="499.33" x2="499.33" y1="184.80" y2="191.80" stroke="#d3daee" stroke-width="1"/><line x1="521.50" x2="521.50" y1="184.80" y2="191.80" stroke="#d3daee" stroke-width="1"/><line x1="543.67" x2="543.67" y1="184.80" y2="191.80" stroke="#d3daee" stroke-width="1"/><line x1="565.83" x2="565.83" y1="184.80" y2="191.80" stroke="#d3daee" stroke-width="1"/><line x1="588.00" x2="588.00" y1="184.80" y2="191.80" stroke="#d3daee" stroke-width="1"/><text transform="translate(68.6 196.0) rotate(-45)" font-size="8.1" text-anchor="end" fill="#666">7 PM</text><text transform="translate(90.8 196.0) rotate(-45)" font-size="8.1" text-anchor="end" fill="#666">8 PM</text><text transform="translate(112.9 196.0) rotate(-45)" font-size="8.1" text-anchor="end" fill="#666">9 PM</text><text transform="translate(135.1 196.0) rotate(-45)" font-size="8.1" text-anchor="end" fill="#666">10 PM</text><text transform="translate(157.2 196.0) rotate(-45)" font-size="8.1" text-anchor="end" fill="#666">11 PM</text><text transform="translate(179.4 196.0) rotate(-45)" font-size="8.1" text-anchor="end" fill="#666">Feb 08, 2022 12 AM</text><text transform="translate(201.6 196.0) rotate(-45)" font-size="8.1" text-anchor="end" fill="#666">1 AM</text><text transform="translate(223.8 196.0) rotate(-45)" font-size="8.1" text-anchor="end" fill="#666">2 AM</text><text transform="translate(245.9 196.0) rotate(-45)" font-size="8.1" text-anchor="end" fill="#666">3 AM</text><text transform="translate(268.1 196.0) rotate(-45)" font-size="8.1" text-anchor="end" fill="#666">4 AM</text><text transform="translate(290.2 196.0) rotate(-45)" font-size="8.1" text-anchor="end" fill="#666">5 AM</text><text transform="translate(312.4 196.0) rotate(-45)" font-size="8.1" text-anchor="end" fill="#666">6 AM</text><text transform="translate(334.6 196.0) rotate(-45)" font-size="8.1" text-anchor="end" fill="#666">7 AM</text><text transform="translate(356.8 196.0) rotate(-45)" font-size="8.1" text-anchor="end" fill="#666">8 AM</text><text transform="translate(378.9 196.0) rotate(-45)" font-size="8.1" text-anchor="end" fill="#666">9 AM</text><text transform="translate(401.1 196.0) rotate(-45)" font-size="8.1" text-anchor="end" fill="#666">10 AM</text><text transform="translate(423.2 196.0) rotate(-45)" font-size="8.1" text-anchor="end" fill="#666">11 AM</text><text transform="translate(445.4 196.0) rotate(-45)" font-size="8.1" text-anchor="end" fill="#666">12 PM</text><text transform="translate(467.6 196.0) rotate(-45)" font-size="8.1" text-anchor="end" fill="#666">1 PM</text><text transform="translate(489.8 196.0) rotate(-45)" font-size="8.1" text-anchor="end" fill="#666">2 PM</text><text transform="translate(511.9 196.0) rotate(-45)" font-size="8.1" text-anchor="end" fill="#666">3 PM</text><text transform="translate(534.1 196.0) rotate(-45)" font-size="8.1" text-anchor="end" fill="#666">4 PM</text><text transform="translate(556.2 196.0) rotate(-45)" font-size="8.1" text-anchor="end" fill="#666">5 PM</text><text transform="translate(578.4 196.0) rotate(-45)" font-size="8.1" text-anchor="end" fill="#666">6 PM</text><text x="297.6" y="17.8" font-size="13.2" text-anchor="middle" fill="#333">Bishkek – PM2.5</text><text transform="translate(21.5 115.5) rotate(-90)" font-size="8" text-anchor="middle" fill="#000">AQI</text></svg></div>
<div class="abs" id="cc">
<div class="b"><div style="font-size:11.15px;padding-top:4.2px;line-height:14px">Current Conditions</div><div style="font-size:9px;line-height:17.5px">observed at</div><div style="font-size:11.15px;line-height:15.5px">Feb 8, 2022 6:00 PM (LT)</div></div>
<div class="r">157 AQI<br>Unhealthy<br>PM2.5</div>
<div class="hm">Health Message</div>
<div class="tx">Everyone may begin to experience health<br>effects when AQI values are between 151<br>and 200. Members of sensitive groups may<br>experience more serious health effects.</div>
</div>
<div class="abs" id="note2">Note: Values above 500 are considered Beyond</div>
</body>
</html>
